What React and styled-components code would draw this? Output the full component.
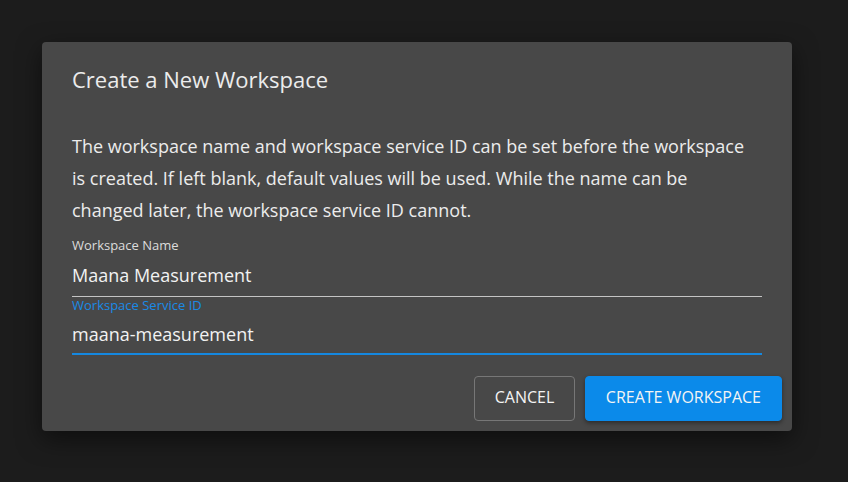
import React from 'react'
import styled, { createGlobalStyle } from 'styled-components'

const Global = createGlobalStyle`
html, body {
  margin: 0;
  padding: 0;
  background: #1c1c1c;
  font-family: "Open Sans", "Noto Sans", sans-serif;
}
`

const Backdrop = styled.div`
width: 848px;
height: 482px;
box-sizing: border-box;
padding: 42px 56px 0 42px;
background: #1c1c1c;
`

const Dialog = styled.div`
width: 750px;
height: 389px;
box-sizing: border-box;
background: #484848;
border-radius: 4px;
box-shadow: 0 8px 24px rgba(0, 0, 0, 0.5);
display: flex;
flex-direction: column;
color: #ececec;
`

const Title = styled.h2`
margin: 0;
padding: 22px 30px 0;
font-size: 22px;
font-weight: 400;
line-height: 30px;
`

const Body = styled.div`
padding: 36px 30px 0;
display: flex;
flex-direction: column;
`

const Text = styled.p`
margin: 0;
font-size: 18px;
line-height: 32px;
white-space: nowrap;
`

const Field = styled.label`
display: flex;
flex-direction: column;
margin-top: ${p => p.$active ? '-1px' : '10px'};
padding-bottom: ${p => p.$active ? '0' : '2px'};
border-bottom: ${p => p.$active ? '2px solid #1588e0' : '1px solid #c4c4c4'};
`

const Label = styled.span`
font-size: 13px;
line-height: 18px;
color: ${p => p.$active ? '#1a8ae6' : '#dcdcdc'};
`

const Value = styled.span`
margin-top: ${p => p.$active ? '1px' : '2px'};
font-size: 18px;
line-height: 38px;
color: #f2f2f2;
`

const Actions = styled.div`
margin-top: auto;
padding: 0 10px 10px;
display: flex;
justify-content: flex-end;
gap: 10px;
`

const Button = styled.button`
height: 45px;
padding: 0 ${p => p.$primary ? '20px' : '19.5px'} 3px;
border-radius: 4px;
font-family: inherit;
font-size: 16px;
text-transform: uppercase;
color: #f4f4f4;
border: 1px solid ${p => p.$primary ? '#0b8aea' : '#777'};
background: ${p => p.$primary ? '#0b8aea' : 'transparent'};
box-shadow: ${p => p.$primary ? '0 2px 4px rgba(0,0,0,0.4)' : 'none'};
cursor: pointer;
`

const App = () => {
    return(
        <>
        <Global />
        <Backdrop>
            <Dialog>
                <Title>Create a New Workspace</Title>
                <Body>
                    <Text>
                        The workspace name and workspace service ID can be set before the workspace<br />
                        is created. If left blank, default values will be used. While the name can be<br />
                        changed later, the workspace service ID cannot.
                    </Text>
                    <Field>
                        <Label>Workspace Name</Label>
                        <Value>Maana Measurement</Value>
                    </Field>
                    <Field $active>
                        <Label $active>Workspace Service ID</Label>
                        <Value $active>maana-measurement</Value>
                    </Field>
                </Body>
                <Actions>
                    <Button>Cancel</Button>
                    <Button $primary>Create Workspace</Button>
                </Actions>
            </Dialog>
        </Backdrop>
        </>
    );
}

export default App;
